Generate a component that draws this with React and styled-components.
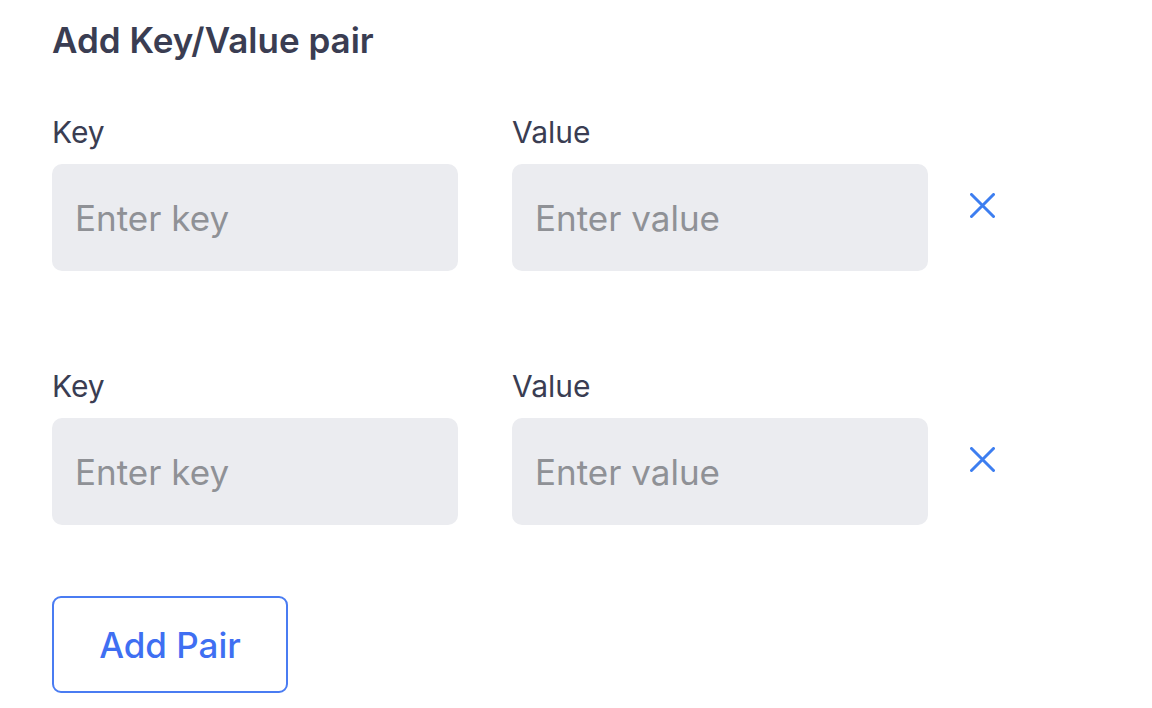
import React from "react";
import styled, { createGlobalStyle } from "styled-components";

const GlobalStyle = createGlobalStyle`
  body {
    margin: 0;
    background: #fff;
    font-family: Inter, "Open Sans", sans-serif;
  }
`;

const Page = styled.div`
  padding: 18px 52px 0;
`;

const Title = styled.h2`
  margin: 0 0 52px;
  font-size: 35px;
  font-weight: 600;
  color: #3a3d52;
  line-height: 44px;
`;

const PairList = styled.div`
  display: flex;
  flex-direction: column;
  gap: 97px;
`;

const PairRow = styled.div`
  display: flex;
  align-items: flex-start;
  gap: 54px;
`;

const Field = styled.div`
  display: flex;
  flex-direction: column;
  width: ${(p) => p.width}px;
`;

const Label = styled.label`
  font-size: 30px;
  color: #3a3d52;
  line-height: 36px;
  margin-bottom: 14px;
`;

const Input = styled.input`
  height: 107px;
  box-sizing: border-box;
  border: none;
  border-radius: 10px;
  background: #ebecf0;
  padding: 0 23px;
  font-family: inherit;
  font-size: 35px;
  color: #3a3d52;
  outline: none;
  &::placeholder {
    color: #8f9196;
  }
`;

const RemoveButton = styled.button`
  margin-top: 79px;
  margin-left: -12px;
  background: none;
  border: none;
  padding: 0;
  width: 25px;
  height: 25px;
  display: flex;
  cursor: pointer;
`;

const AddButton = styled.button`
  margin-top: 71px;
  width: 236px;
  height: 97px;
  border: 2px solid #4a7cf2;
  border-radius: 9px;
  background: #fff;
  color: #3f6ff2;
  font-family: inherit;
  font-size: 35px;
  font-weight: 500;
  cursor: pointer;
`;

const CloseIcon = () => (
  <svg width="25" height="25" viewBox="0 0 25 25" fill="none">
    <path d="M1.5 1.5L23.5 23.5M23.5 1.5L1.5 23.5" stroke="#3d7ef0" strokeWidth="3" strokeLinecap="round" />
  </svg>
);

const Pair = () => (
  <PairRow>
    <Field width={406}>
      <Label>Key</Label>
      <Input placeholder="Enter key" />
    </Field>
    <Field width={416}>
      <Label>Value</Label>
      <Input placeholder="Enter value" />
    </Field>
    <RemoveButton aria-label="Remove">
      <CloseIcon />
    </RemoveButton>
  </PairRow>
);

const App = () => (
  <>
    <GlobalStyle />
    <Page>
      <Title>Add Key/Value pair</Title>
      <PairList>
        <Pair />
        <Pair />
      </PairList>
      <AddButton>Add Pair</AddButton>
    </Page>
  </>
);

export default App;
